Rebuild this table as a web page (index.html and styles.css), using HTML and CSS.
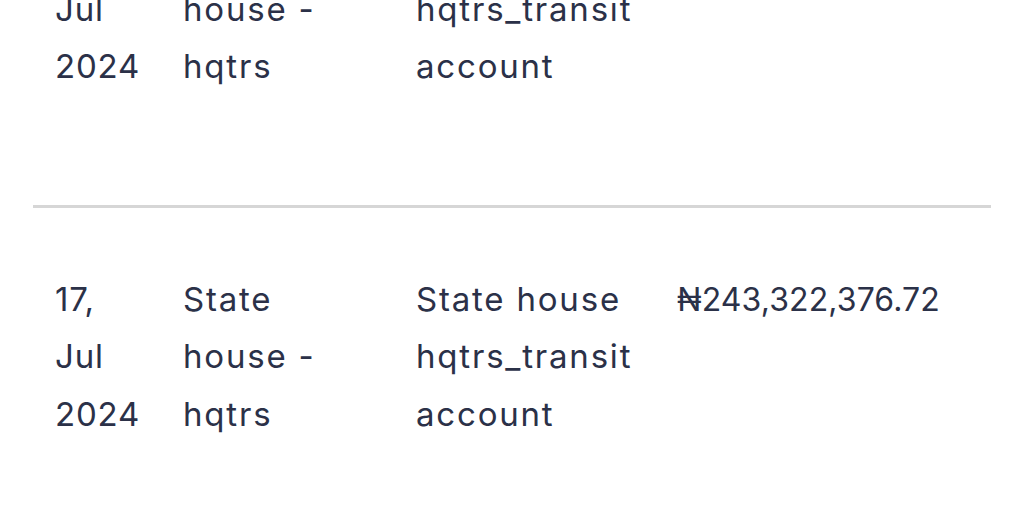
FILE: index.html
```html
<!DOCTYPE html>
<html>
<head>
<meta charset="utf-8">
<link rel="stylesheet" href="styles.css">
</head>
<body>
<div class="table">
  <div class="row first">
    <div class="cell date">17,<br>Jul<br>2024</div>
    <div class="cell">State<br>house -<br>hqtrs</div>
    <div class="cell">State house<br>hqtrs_transit<br>account</div>
    <div class="cell amount">₦243,322,376.72</div>
  </div>
  <div class="row second">
    <div class="cell date">17,<br>Jul<br>2024</div>
    <div class="cell">State<br>house -<br>hqtrs</div>
    <div class="cell">State house<br>hqtrs_transit<br>account</div>
    <div class="cell amount">₦243,322,376.72</div>
  </div>
</div>
</body>
</html>
```
FILE: styles.css
```css
html, body {
  margin: 0;
  padding: 0;
  background: #ffffff;
  overflow: hidden;
}
.table {
  margin: -138px 33px 0 33px;
  font-family: Inter, "Noto Sans", sans-serif;
  font-size: 33px;
  line-height: 57.5px;
  letter-spacing: 1.8px;
  color: #2b3148;
}
.row {
  display: grid;
  grid-template-columns: 128px 233px 261px 1fr;
  padding: 61px 0 0 22px;
}
.row.first {
  border-bottom: 3px solid #d6d6d6;
  padding-bottom: 109px;
}
.row.second {
  padding-top: 63px;
  padding-bottom: 110px;
}
.cell {
  white-space: nowrap;
}
.date {
  letter-spacing: 0.8px;
}
.amount {
  font-size: 32px;
  letter-spacing: 0.1px;
}
```
